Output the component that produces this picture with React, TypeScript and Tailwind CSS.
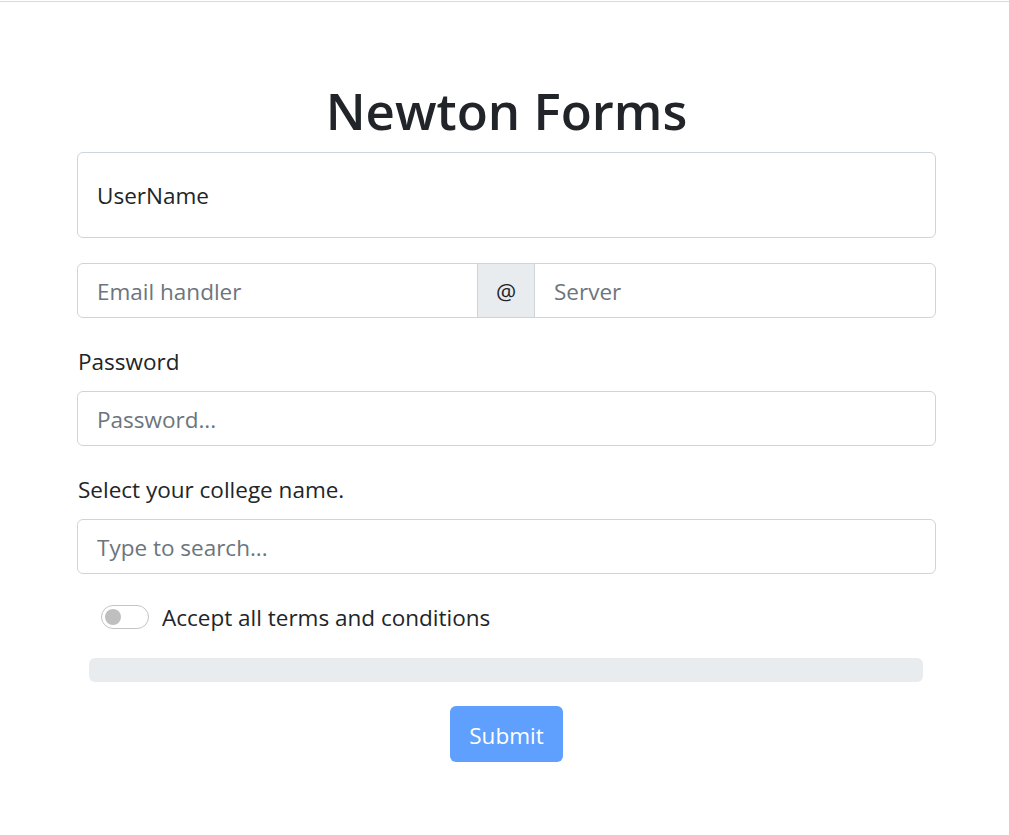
import React from 'react';

export default function App() {
  return (
    <div className="min-h-screen bg-white text-[#212529]" style={{ fontFamily: '"Open Sans", "Noto Sans", sans-serif' }}>
      <div className="mt-px h-px bg-[#dadada]" />
      <form className="ml-[77px] w-[859px] flex flex-col" onSubmit={(e) => e.preventDefault()}>
        <h1 className="mt-[77px] mb-[11px] text-center text-[51px] leading-[62px] font-semibold">Newton Forms</h1>

        {/* username */}
        <div className="h-[86px] border border-[#ced4da] rounded-[6px] px-[19px] pt-[2px] flex items-center text-[22.5px]">
          UserName
        </div>

        {/* email group */}
        <div className="mt-[25px] h-[55px] flex text-[22.5px]">
          <input
            className="w-[401px] border border-[#ced4da] rounded-l-[6px] px-[19px] pt-[2px] outline-none placeholder:text-[#6c757d]"
            placeholder="Email handler"
          />
          <span className="w-[58px] -ml-px border border-[#ced4da] bg-[#e9ecef] pt-[2px] flex items-center justify-center">@</span>
          <input
            className="flex-1 -ml-px border border-[#ced4da] rounded-r-[6px] px-[19px] pt-[2px] outline-none placeholder:text-[#6c757d]"
            placeholder="Server"
          />
        </div>

        <label className="mt-[29px] text-[22.5px] leading-[30px] pl-px">Password</label>
        <input
          type="password"
          className="mt-[14px] h-[55px] border border-[#ced4da] rounded-[6px] px-[19px] pt-[2px] text-[22.5px] outline-none placeholder:text-[#6c757d]"
          placeholder="Password..."
        />

        <label className="mt-[29px] text-[22.5px] leading-[30px] pl-px">Select your college name.</label>
        <input
          className="mt-[14px] h-[55px] border border-[#ced4da] rounded-[6px] px-[19px] pt-[2px] text-[22.5px] outline-none placeholder:text-[#6c757d]"
          placeholder="Type to search..."
        />

        <div className="mt-[28px] h-[30px] pl-[24px] flex items-center gap-[13px] text-[22.5px] leading-[30px]">
          <span className="w-[48px] h-[24px] rounded-full border border-[#c4c4c4] flex items-center px-[3px]">
            <span className="w-[16px] h-[16px] rounded-full bg-[#bfbfbf]" />
          </span>
          <span className="pt-[2px]">Accept all terms and conditions</span>
        </div>

        <div className="mt-[26px] mx-[12px] mr-[13px] h-[24px] rounded-[6px] bg-[#e9ecef]" />

        <div className="mt-[24px] flex justify-center">
          <button
            type="submit"
            disabled
            className="w-[113px] h-[56px] rounded-[6px] bg-[#5fa0fe] text-white text-[22.5px] pt-[3px]"
          >
            Submit
          </button>
        </div>
      </form>
    </div>
  );
}
